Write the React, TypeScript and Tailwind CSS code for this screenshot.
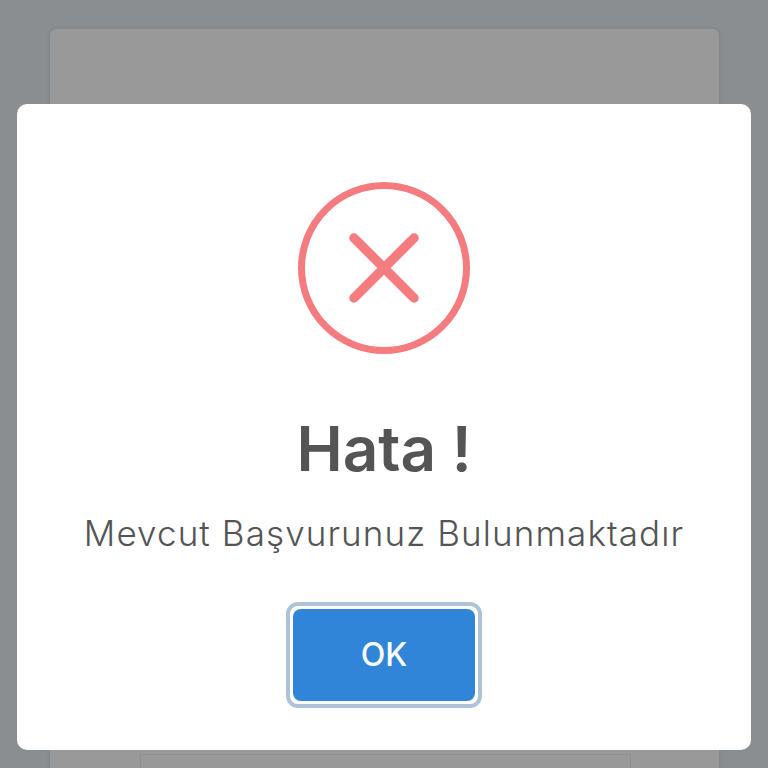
export default function App() {
  return (
    <div className="relative h-[768px] w-[768px] overflow-hidden bg-[#8a8e91] font-['Inter','Liberation_Sans',sans-serif]">
      {/* Page behind the dialog */}
      <div className="pl-[50px] pr-[49px] pt-[29px]">
        <div className="h-[739px] rounded-t-md bg-[#999999] pl-[90px] pr-[88px] pt-[725px] shadow-[0_0_4px_rgba(0,0,0,0.12)]">
          <div className="h-[14px] border border-b-0 border-[#8f8f8f]" />
        </div>
      </div>

      {/* Dialog */}
      <div className="absolute left-[17px] top-[104px] flex h-[646px] w-[734px] flex-col items-center rounded-[10px] bg-white">
        <svg className="mt-[78px]" width="172" height="172" viewBox="0 0 172 172" fill="none">
          <circle cx="86" cy="86" r="82.5" stroke="#f47c7f" strokeWidth="7" />
          <path d="M56 56L116 116M116 56L56 116" stroke="#f47c7f" strokeWidth="9.5" strokeLinecap="round" />
        </svg>
        <h2 className="mt-[55px] text-[62px] leading-[80px] font-semibold text-[#545454]">Hata !</h2>
        <p className="mt-[22px] text-[35px] leading-[44px] font-light tracking-[1.1px] text-[#545454]">Mevcut Başvurunuz Bulunmaktadır</p>
        <div className="mt-[47px] rounded-[12px] border-[4px] border-[#afc3d8] bg-white p-[3px]">
          <button className="flex h-[92px] w-[182px] items-center justify-center rounded-[8px] bg-[#3085d8] text-[32px] font-medium text-white">
            OK
          </button>
        </div>
      </div>
    </div>
  )
}
